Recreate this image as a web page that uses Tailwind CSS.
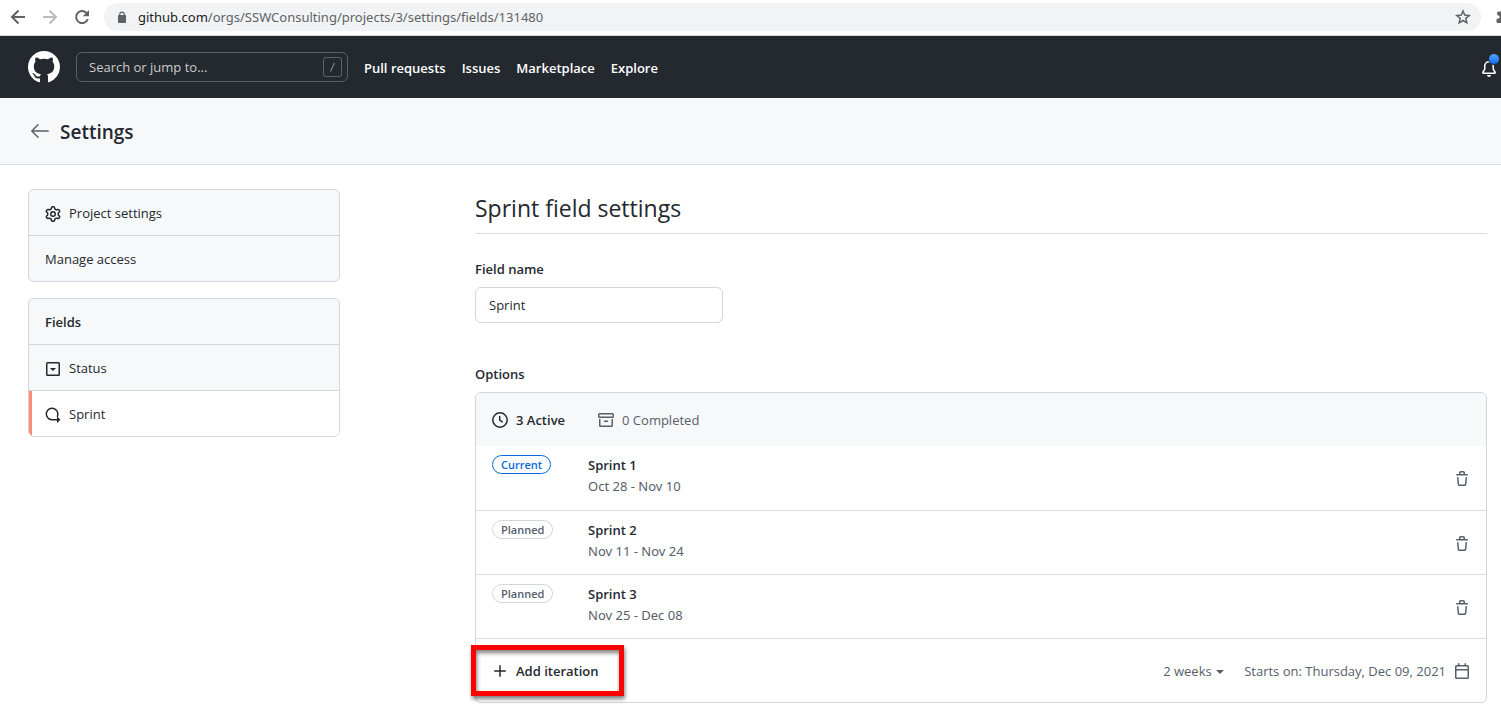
<!DOCTYPE html>
<html lang="en">
<head>
<meta charset="utf-8">
<title>Sprint field settings</title>
<script src="https://cdn.jsdelivr.net/npm/@tailwindcss/browser@4"></script>
</head>
<body class="min-h-screen overflow-x-hidden bg-white font-['Open_Sans','Noto_Sans',sans-serif] text-[13px] leading-5 text-[#24292f]">

<!-- Browser toolbar -->
<div class="flex h-9 items-center overflow-hidden border-b border-[#d5d7da] bg-white pb-px pl-2.5 text-[#5f6368]">
  <button type="button" aria-label="Back" class="shrink-0"><svg class="size-4" viewBox="0 0 16 16" fill="none" stroke="currentColor" stroke-width="2"><path d="M15 8H2M8.500 1.500L2 8l6.500 6.500"/></svg></button>
  <button type="button" aria-label="Forward" class="ml-4 shrink-0 text-[#babcbe]"><svg class="size-4" viewBox="0 0 16 16" fill="none" stroke="currentColor" stroke-width="2"><path d="M1 8h13M7.500 1.500L14 8l-6.500 6.500"/></svg></button>
  <button type="button" aria-label="Reload" class="ml-4 shrink-0"><svg class="size-4" viewBox="0 0 16 16"><path fill="none" stroke="currentColor" stroke-width="2" d="M13.800 10A6 6 0 1 1 12.500 4"/><path fill="currentColor" d="M15 1v6.200H8.800z"/></svg></button>
  <div class="ml-3.5 flex h-7 flex-1 items-center rounded-full bg-[#f1f3f4] pr-2.5 pl-3.5">
    <svg class="h-3 w-2 shrink-0" viewBox="0 0 8 12" fill="currentColor"><path d="M1.200 4V3.300a2.800 2.800 0 0 1 5.600 0V4H7.200a.8.8 0 0 1 .8.8v6.400a.8.8 0 0 1-.8.8H.8a.8.8 0 0 1-.8-.8V4.800A.8.8 0 0 1 .8 4zM2.400 4h3.200v-.7a1.600 1.600 0 0 0-3.200 0z"/></svg>
    <span class="ml-3 flex-1 font-['Noto_Sans',sans-serif]"><span class="text-[#202124]">github.com</span>/orgs/SSWConsulting/projects/3/settings/fields/131480</span>
    <button type="button" aria-label="Bookmark"><svg class="size-4" viewBox="0 0 16 16" fill="none" stroke="currentColor" stroke-width="1.500"><path d="M8 2l1.700 4.100 4.500.4-3.400 2.900 1 4.400L8 11.500l-3.800 2.300 1-4.400-3.400-2.900 4.500-.4z"/></svg></button>
  </div>
  <svg class="ml-3.5 h-4 w-1.5 shrink-0" viewBox="0 0 6 16" fill="currentColor"><path d="M6 2.500H3.500a1.300 1.300 0 0 0-1.300 1.300v2.400h.6a1.700 1.700 0 0 1 0 3.600h-1.300v3a1.300 1.300 0 0 0 1.300 1.300H6z"/></svg>
</div>

<!-- Site header -->
<header class="flex h-[62px] items-center overflow-hidden bg-[#24292f] pl-7 text-white">
  <a href="#" aria-label="Homepage" class="shrink-0"><svg class="size-8" viewBox="0 0 16 16" fill="currentColor"><path fill-rule="evenodd" d="M8 0C3.580 0 0 3.580 0 8c0 3.540 2.290 6.530 5.470 7.590.4.070.550-.170.550-.380 0-.190-.010-.820-.010-1.490-2.010.370-2.530-.490-2.690-.940-.090-.230-.480-.940-.820-1.130-.280-.150-.680-.520-.010-.530.630-.010 1.080.580 1.230.820.720 1.210 1.870.870 2.330.660.070-.520.280-.870.510-1.070-1.780-.2-3.640-.890-3.640-3.950 0-.870.310-1.590.820-2.150-.080-.2-.360-1.020.080-2.120 0 0 .670-.210 2.200.820.640-.180 1.320-.270 2-.270.680 0 1.360.090 2 .270 1.530-1.040 2.200-.820 2.200-.820.440 1.100.160 1.920.080 2.120.510.560.820 1.270.820 2.150 0 3.070-1.870 3.750-3.650 3.950.290.250.540.730.540 1.480 0 1.070-.010 1.930-.010 2.200 0 .210.150.460.550.380A8.013 8.013 0 0016 8c0-4.420-3.580-8-8-8z"/></svg></a>
  <label class="ml-4 flex h-[30px] w-[272px] items-center rounded-md border border-[#57606a] pl-3 pr-[5px]">
    <input type="text" aria-label="Search or jump to" placeholder="Search or jump to..." class="min-w-0 flex-1 bg-transparent placeholder:text-[#cacbcc] placeholder:opacity-100 outline-none">
    <svg class="h-5 w-[19px] shrink-0 text-[#979a9c]" viewBox="0 0 19 20" fill="none" stroke="currentColor"><rect x=".5" y=".5" width="18" height="19" rx="2.500" opacity=".5"/><path d="M11.500 6l-4 8.500"/></svg>
  </label>
  <nav class="ml-4 flex gap-4 pt-0.5 font-semibold whitespace-nowrap">
    <a href="#">Pull requests</a><a href="#">Issues</a><a href="#">Marketplace</a><a href="#">Explore</a>
  </nav>
  <button type="button" aria-label="Notifications" class="relative ml-auto mr-1 pt-1">
    <svg class="size-4" viewBox="0 0 16 16" fill="currentColor"><path d="M8 16a2 2 0 001.985-1.750c.017-.137-.097-.250-.235-.250h-3.500c-.138 0-.252.113-.235.250A2 2 0 008 16z"/><path fill-rule="evenodd" d="M8 1.500A3.500 3.500 0 004.500 5v2.947c0 .346-.102.683-.294.970l-1.703 2.556a.018.018 0 00-.003.010l.001.006c0 .002.002.004.004.006a.017.017 0 00.006.004l.007.001h10.964l.007-.001a.016.016 0 00.006-.004.016.016 0 00.004-.006l.001-.007a.017.017 0 00-.003-.010l-1.703-2.554a1.750 1.750 0 01-.294-.970V5A3.500 3.500 0 008 1.500zM3 5a5 5 0 0110 0v2.947c0 .050.015.098.042.139l1.703 2.555A1.518 1.518 0 0113.482 13H2.518a1.518 1.518 0 01-1.263-2.360l1.703-2.554A.250.250 0 003 7.947V5z"/></svg>
    <span class="absolute -top-1 -right-[3px] size-3 rounded-full border border-[#24292f] bg-linear-to-b from-[#54a3ff] to-[#006eed]"></span>
  </button>
</header>

<!-- Page title bar -->
<div class="flex h-[67px] items-center gap-2.5 border-b border-[#d8dee4] bg-[#f6f8fa] pl-[30px]">
  <a href="#" aria-label="Back to project" class="text-[#57606a]"><svg class="h-4 w-5" viewBox="0 0 20 16" fill="none" stroke="currentColor" stroke-width="1.500" stroke-linecap="round" stroke-linejoin="round"><path d="M18.200 8H1.800M8 1.700L1.800 8 8 14.300"/></svg></a>
  <h1 class="pt-px text-[19px] leading-7 font-semibold">Settings</h1>
</div>

<div class="flex items-start pt-6 pr-3.5 pb-3.5 pl-7">
  <!-- Side navigation -->
  <aside class="w-[312px] shrink-0">
    <nav class="divide-y divide-[#d0d7de] overflow-hidden rounded-md border border-[#d0d7de] bg-[#f6f8fa]">
      <a href="#" class="flex h-[46px] items-center gap-2 px-4">
        <svg class="mt-0.5 size-4" viewBox="0 0 16 16" fill="currentColor"><path fill-rule="evenodd" d="M7.429 1.525a6.593 6.593 0 011.142 0c.036.003.108.036.137.146l.289 1.105c.147.560.550.967.997 1.189.174.086.341.183.501.290.417.278.970.423 1.530.270l1.102-.303c.110-.030.175.016.195.046.219.310.410.641.573.989.014.031.022.110-.059.190l-.815.806c-.411.406-.562.957-.530 1.456a4.588 4.588 0 010 .582c-.032.499.119 1.050.530 1.456l.815.806c.080.080.073.159.059.190a6.494 6.494 0 01-.573.990c-.020.029-.086.074-.195.045l-1.103-.303c-.559-.153-1.112-.008-1.529.270-.160.107-.327.204-.500.290-.449.222-.851.628-.998 1.189l-.289 1.105c-.029.110-.101.143-.137.146a6.613 6.613 0 01-1.142 0c-.036-.003-.108-.037-.137-.146l-.289-1.105c-.147-.560-.550-.967-.997-1.189a4.502 4.502 0 01-.501-.290c-.417-.278-.970-.423-1.530-.270l-1.102.303c-.110.030-.175-.016-.195-.046a6.492 6.492 0 01-.573-.989c-.014-.031-.022-.110.059-.190l.815-.806c.411-.406.562-.957.530-1.456a4.587 4.587 0 010-.582c.032-.499-.119-1.050-.530-1.456l-.815-.806c-.080-.080-.073-.159-.059-.190a6.440 6.440 0 01.573-.990c.020-.029.086-.075.195-.045l1.103.303c.559.153 1.112.008 1.529-.270.160-.107.327-.204.500-.290.449-.222.851-.628.998-1.189l.289-1.105c.029-.110.101-.143.137-.146zM8 0c-.236 0-.470.010-.701.030-.743.065-1.290.615-1.458 1.261l-.290 1.106c-.017.066-.078.158-.211.224a5.994 5.994 0 00-.668.386c-.123.082-.233.090-.300.071L3.270 2.776c-.644-.177-1.392.020-1.820.630a7.977 7.977 0 00-.704 1.217c-.315.675-.111 1.422.363 1.891l.815.806c.050.048.098.147.088.294a6.084 6.084 0 000 .772c.010.147-.038.246-.088.294l-.815.806c-.474.469-.678 1.216-.363 1.891.200.428.436.835.704 1.218.428.609 1.176.806 1.820.630l1.103-.303c.066-.019.176-.011.299.071.213.143.436.272.668.386.133.066.194.158.212.224l.289 1.106c.169.646.715 1.196 1.458 1.260a8.094 8.094 0 001.402 0c.743-.064 1.290-.614 1.458-1.260l.290-1.106c.017-.066.078-.158.211-.224a5.980 5.980 0 00.668-.386c.123-.082.233-.090.300-.071l1.102.302c.644.177 1.392-.020 1.820-.630.268-.382.505-.789.704-1.217.315-.675.111-1.422-.364-1.891l-.814-.806c-.050-.048-.098-.147-.088-.294a6.100 6.100 0 000-.772c-.010-.147.039-.246.088-.294l.814-.806c.475-.469.679-1.216.364-1.891a7.992 7.992 0 00-.704-1.218c-.428-.609-1.176-.806-1.820-.630l-1.103.303c-.066.019-.176.011-.299-.071a5.991 5.991 0 00-.668-.386c-.133-.066-.194-.158-.212-.224L10.160 1.290C9.990.645 9.444.095 8.701.031A8.094 8.094 0 008 0zm1.500 8a1.500 1.500 0 11-3 0 1.500 1.500 0 013 0zM11 8a3 3 0 11-6 0 3 3 0 016 0z"/></svg>
        Project settings</a>
      <a href="#" class="flex h-[45px] items-center px-4">Manage access</a>
    </nav>
    <nav aria-labelledby="fields-heading" class="mt-4 divide-y divide-[#d0d7de] overflow-hidden rounded-md border border-[#d0d7de] bg-[#f6f8fa]">
      <h2 id="fields-heading" class="flex h-[46px] items-center px-4 font-semibold">Fields</h2>
      <a href="#" class="flex h-[46px] items-center gap-2 px-4">
        <svg class="mt-0.5 size-4" viewBox="0 0 16 16" fill="none" stroke="currentColor" stroke-width="1.500"><rect x="1.750" y="1.750" width="12.500" height="12.500" rx=".8"/><path fill="currentColor" stroke="none" d="M4.900 7h6.200L8 10z"/></svg>
        Status</a>
      <a href="#" aria-current="page" class="flex h-[45px] items-center gap-2 border-l-[3px] border-l-[#fd8c73] bg-white pr-4 pl-[13px]">
        <svg class="mt-0.5 size-4" viewBox="0 0 16 16" fill="none" stroke="currentColor" stroke-width="1.500" stroke-linecap="round"><path d="M12.400 9.200A5.750 5.750 0 1 0 7 12.750h6"/><path fill="currentColor" stroke="none" d="M12 9.900c0-.3.300-.4.500-.2l2.700 2.700c.2.200.2.500 0 .7l-2.700 2.700c-.2.200-.5 0-.5-.2z"/></svg>
        Sprint</a>
    </nav>
  </aside>

  <!-- Field settings -->
  <main class="ml-[135px] min-w-0 flex-1">
    <h2 class="border-b border-[#d8dee4] pt-[3px] pb-[9px] text-[23px] leading-8 font-normal">Sprint field settings</h2>
    <label for="field-name" class="mt-[25px] block font-semibold">Field name</label>
    <input id="field-name" type="text" value="Sprint" class="mt-2 block h-9 w-[248px] rounded-md border border-[#d0d7de] bg-white px-[13px] outline-none">
    <h3 class="mt-[41px] font-semibold">Options</h3>

    <section class="mt-2 rounded-md border border-[#d0d7de]">
      <div class="flex h-[53px] items-center gap-[33px] rounded-t-md bg-[#f6f8fa] px-4">
        <button type="button" class="flex items-center gap-2 font-semibold">
          <svg class="size-4" viewBox="0 0 16 16" fill="none" stroke="currentColor" stroke-width="1.500" stroke-linecap="round" stroke-linejoin="round"><circle cx="8" cy="8" r="7.200"/><path d="M7.700 4.500V8.200L10.300 9.800"/></svg>
          3 Active</button>
        <button type="button" class="flex items-center gap-2 text-[#57606a]">
          <svg class="size-4" viewBox="0 0 16 16" fill="none" stroke="currentColor" stroke-width="1.500" stroke-linecap="round" stroke-linejoin="round"><rect x=".75" y="1.750" width="14.500" height="3.500" rx=".8"/><path d="M1.750 7.500v6.200c0 .3.300.55.550.55h11.400c.3 0 .55-.3.550-.55V7.500M6.500 9.250h3"/></svg>
          0 Completed</button>
      </div>
      <ul class="divide-y divide-[#d8dee4] border-b border-[#d8dee4]">
        <li class="flex h-[65px] items-start px-4 pt-[9px]">
          <div class="flex w-24 shrink-0"><span class="rounded-full border border-[#0969da] px-2 text-[11px] leading-[17px] font-semibold text-[#0969da]">Current</span></div>
          <div class="flex-1 leading-[21px]"><p class="font-semibold">Sprint 1</p><p class="font-['Noto_Sans',sans-serif] text-[#57606a]">Oct 28 - Nov 10</p></div>
          <button type="button" aria-label="Delete Sprint 1" class="mt-4 text-[#57606a]"><svg class="size-4" viewBox="0 0 16 16" fill="currentColor"><use href="#trash"/></svg></button>
        </li>
        <li class="flex h-16 items-start px-4 pt-[9px]">
          <div class="flex w-24 shrink-0"><span class="rounded-full border border-[#d0d7de] px-2 text-[11px] leading-[17px] font-semibold text-[#57606a]">Planned</span></div>
          <div class="flex-1 leading-[21px]"><p class="font-semibold">Sprint 2</p><p class="font-['Noto_Sans',sans-serif] text-[#57606a]">Nov 11 - Nov 24</p></div>
          <button type="button" aria-label="Delete Sprint 2" class="mt-4 text-[#57606a]"><svg class="size-4" viewBox="0 0 16 16" fill="currentColor"><use href="#trash"/></svg></button>
        </li>
        <li class="flex h-[63px] items-start px-4 pt-[9px]">
          <div class="flex w-24 shrink-0"><span class="rounded-full border border-[#d0d7de] px-2 text-[11px] leading-[17px] font-semibold text-[#57606a]">Planned</span></div>
          <div class="flex-1 leading-[21px]"><p class="font-semibold">Sprint 3</p><p class="font-['Noto_Sans',sans-serif] text-[#57606a]">Nov 25 - Dec 08</p></div>
          <button type="button" aria-label="Delete Sprint 3" class="mt-4 text-[#57606a]"><svg class="size-4" viewBox="0 0 16 16" fill="currentColor"><use href="#trash"/></svg></button>
        </li>
      </ul>
      <div class="relative flex h-[63px] items-center px-4 text-[#57606a]">
        <button type="button" class="flex items-center gap-2 font-semibold text-[#24292f]">
          <svg class="size-4" viewBox="0 0 16 16" fill="none" stroke="currentColor" stroke-width="1.500" stroke-linecap="round"><path d="M8 2.750v10.500M2.750 8h10.500"/></svg>
          Add iteration</button>
        <label class="ml-auto flex items-center gap-1">
          <select aria-label="Duration" class="appearance-none bg-transparent outline-none"><option>2 weeks</option></select>
          <svg class="mt-0.5 h-1 w-2" viewBox="0 0 8 4" fill="currentColor"><path d="M0 0h8L4 4z"/></svg>
        </label>
        <button type="button" class="ml-5 flex items-center gap-2">
          Starts on: Thursday, Dec 09, 2021
          <svg class="size-4" viewBox="0 0 16 16" fill="none" stroke="currentColor" stroke-width="1.500" stroke-linecap="round"><rect x="1.750" y="2.750" width="12.500" height="12.500" rx=".8"/><path d="M1.750 6.750h12.500M4.750 .75v2M11.250 .75v2"/></svg>
        </button>
        <!-- Highlight frame over the add button -->
        <div class="pointer-events-none absolute top-[6px] -left-[5px] h-[51px] w-[153px] border-[5px] border-[#fe0000] shadow-[1px_3px_4px_rgba(0,0,0,0.5),inset_1px_3px_4px_rgba(0,0,0,0.5)]"></div>
      </div>
    </section>
  </main>
</div>

<svg class="hidden"><defs><path id="trash" fill-rule="evenodd" d="M6.500 1.750a.250.250 0 01.250-.250h2.500a.250.250 0 01.250.250V3h-3V1.750zm4.500 0V3h2.250a.750.750 0 010 1.500H2.750a.750.750 0 010-1.500H5V1.750C5 .784 5.784 0 6.750 0h2.500C10.216 0 11 .784 11 1.750zM4.496 6.675a.750.750 0 10-1.492.150l.660 6.600A1.750 1.750 0 005.405 15h5.190c.900 0 1.652-.681 1.741-1.576l.660-6.600a.750.750 0 00-1.492-.149l-.660 6.600a.250.250 0 01-.249.225h-5.190a.250.250 0 01-.249-.225l-.660-6.600z"/></defs></svg>
</body>
</html>
